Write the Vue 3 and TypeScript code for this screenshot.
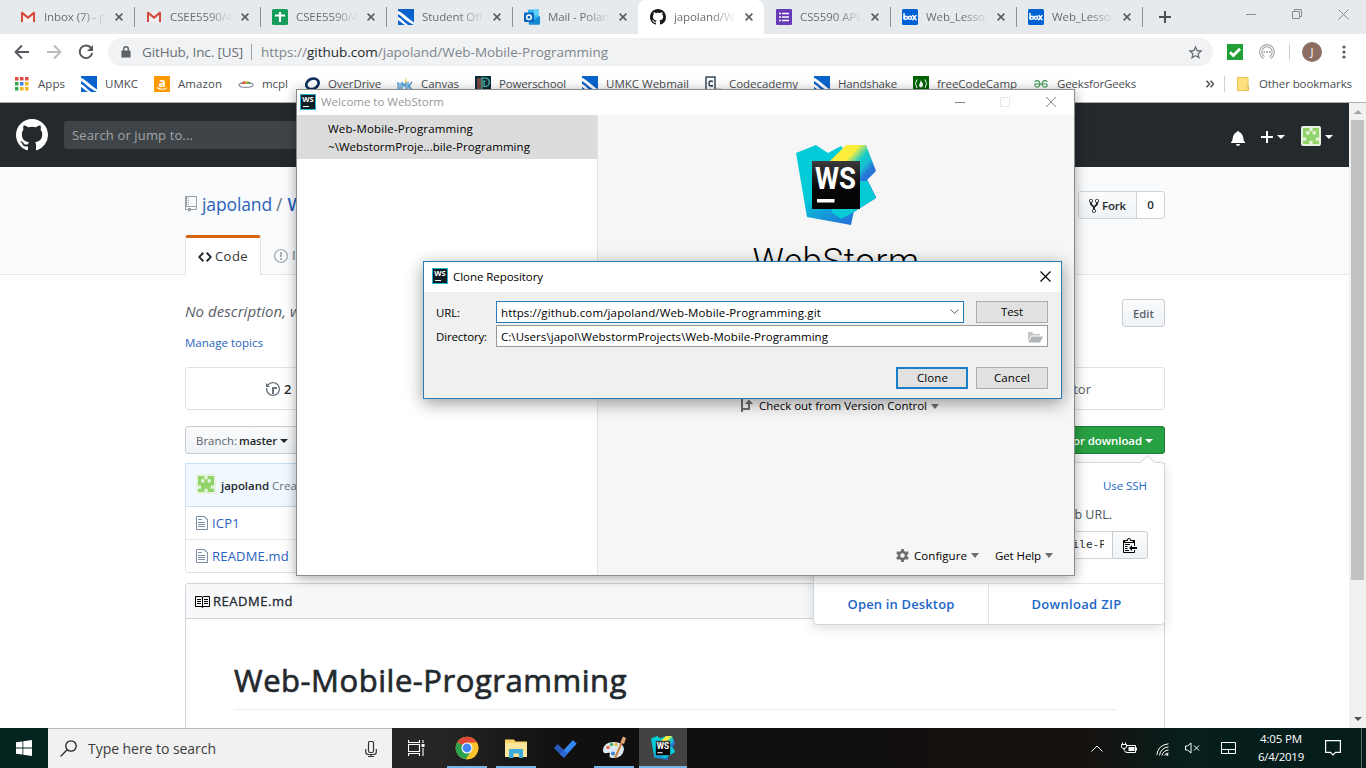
<script setup lang="ts">
interface Tab { icon: string; title: string; active?: boolean; sep?: boolean }
interface Bookmark { icon: string; title: string; width: number }

// Tracks a label in or out so that it takes up exactly the given width.
const vFit = {
  mounted(el: HTMLElement, binding: { value: number }) {
    const natural = el.getBoundingClientRect().width
    const count = (el.textContent ?? '').length
    if (count > 0) {
      el.style.letterSpacing = `${(binding.value - natural) / count}px`
      el.style.width = `${binding.value}px`
    }
  },
}

const tabs: Tab[] = [
  { icon: 'gmail', title: 'Inbox (7) - poland', sep: true },
  { icon: 'gmail', title: 'CSEE5590/490', sep: true },
  { icon: 'sheets', title: 'CSEE5590/490', sep: true },
  { icon: 'umkc', title: 'Student Office', sep: true },
  { icon: 'outlook', title: 'Mail - Poland' },
  { icon: 'github', title: 'japoland/Web', active: true },
  { icon: 'forms', title: 'CS5590 APL', sep: true },
  { icon: 'box', title: 'Web_Lesson', sep: true },
  { icon: 'box', title: 'Web_Lesson', sep: true },
]

const bookmarks: Bookmark[] = [
  { icon: 'apps', title: 'Apps', width: 27 },
  { icon: 'umkc', title: 'UMKC', width: 33 },
  { icon: 'amazon', title: 'Amazon', width: 44 },
  { icon: 'mcpl', title: 'mcpl', width: 26 },
  { icon: 'overdrive', title: 'OverDrive', width: 53 },
  { icon: 'canvas', title: 'Canvas', width: 38 },
  { icon: 'power', title: 'Powerschool', width: 67 },
  { icon: 'umkc', title: 'UMKC Webmail', width: 83 },
  { icon: 'codecademy', title: 'Codecademy', width: 69 },
  { icon: 'umkc', title: 'Handshake', width: 59 },
  { icon: 'fcc', title: 'freeCodeCamp', width: 80 },
  { icon: 'geeks', title: 'GeeksforGeeks', width: 79 },
]

const files: { name: string; width: number }[] = [
  { name: 'ICP1', width: 28 },
  { name: 'README.md', width: 77 },
]

const pinned: { icon: string; running: boolean; active?: boolean }[] = [
  { icon: 'chrome', running: true },
  { icon: 'explorer', running: true },
  { icon: 'todo', running: false },
  { icon: 'paint', running: true },
  { icon: 'wslogo', running: true, active: true },
]
</script>

<template>
  <div class="desktop">
    <svg class="sprite" aria-hidden="true">
      <defs>
        <linearGradient id="wsBlue" x1="0.2" y1="0.3" x2="0.6" y2="1">
          <stop offset="0.35" stop-color="#04cbd8" /><stop offset="1" stop-color="#2274d8" />
        </linearGradient>
        <linearGradient id="wsYellow" x1="0.25" y1="0.1" x2="0.8" y2="0.9">
          <stop offset="0.14" stop-color="#fdee3c" /><stop offset="0.32" stop-color="#17cbc7" /><stop offset="0.44" stop-color="#17c0d4" /><stop offset="0.56" stop-color="#2775d8" />
        </linearGradient>
        <linearGradient id="wsBlack" x1="0" y1="0" x2="0" y2="1">
          <stop offset="0" stop-color="#3b3b3b" /><stop offset="0.6" stop-color="#050505" />
        </linearGradient>
      </defs>
      <symbol id="gmail" viewBox="0 0 16 16">
        <path d="M2 3h12v10H2z" fill="#f1efef" /><path d="M1 3.4V13h2V6l5 4 5-4v7h2V3.4L13.800 2.600 8 7.200 2.200 2.600z" fill="#d54b3d" />
      </symbol>
      <symbol id="sheets" viewBox="0 0 16 16">
        <rect width="16" height="16" rx="1.500" fill="#149d5b" /><path d="M3 6.500h10M8 3v10" stroke="#fff" stroke-width="2.200" />
      </symbol>
      <symbol id="umkc" viewBox="0 0 16 16">
        <rect width="16" height="16" fill="#0a63cb" />
        <path d="M0 2c4 1 8 6 16 11.500V16C8 12.500 4 7 0 5z" fill="#fff" /><path d="M0 8c3 1 6 5 10 8H7C4 14.500 2 12 0 11z" fill="#fff" />
      </symbol>
      <symbol id="outlook" viewBox="0 0 16 16">
        <rect x="4" y="0.500" width="11" height="12" rx="1" fill="#33b6ee" /><rect x="9.500" y="0.500" width="5.500" height="6" fill="#60d2fa" />
        <path d="M4 8l6 3 6-4v7.500a1.200 1.200 0 0 1-1.200 1.200H5z" fill="#1688d6" />
        <rect y="3.500" width="10" height="9.500" rx="1" fill="#0967bd" /><circle cx="5" cy="8.200" r="2.300" fill="none" stroke="#fff" stroke-width="1.500" />
      </symbol>
      <symbol id="github" viewBox="0 0 16 16">
        <path d="M8 0C3.580 0 0 3.580 0 8c0 3.540 2.290 6.530 5.470 7.590.4.070.55-.17.55-.38 0-.19-.01-.82-.01-1.490-2.010.37-2.530-.49-2.690-.94-.09-.23-.48-.94-.82-1.130-.28-.15-.68-.52-.01-.53.63-.01 1.080.58 1.230.82.72 1.210 1.870.87 2.330.66.07-.52.28-.87.51-1.070-1.780-.2-3.640-.89-3.640-3.950 0-.87.31-1.590.82-2.150-.08-.2-.36-1.020.08-2.120 0 0 .67-.21 2.200.82.64-.18 1.320-.27 2-.27s1.360.09 2 .27c1.530-1.040 2.200-.82 2.200-.82.44 1.100.16 1.920.08 2.120.51.56.82 1.270.82 2.150 0 3.070-1.870 3.750-3.650 3.950.29.25.54.73.54 1.480 0 1.070-.01 1.930-.01 2.200 0 .21.15.46.55.38A8.010 8.010 0 0 0 16 8c0-4.420-3.580-8-8-8z" fill="currentColor" />
      </symbol>
      <symbol id="forms" viewBox="0 0 16 16">
        <rect width="16" height="16" rx="1" fill="#673ab7" /><path d="M3 4.500h2M3 8h2M3 11.500h2M6 4.500h7M6 8h7M6 11.500h7" stroke="#fff" stroke-width="1.600" />
      </symbol>
      <symbol id="box" viewBox="0 0 16 16">
        <rect width="16" height="16" rx="1.500" fill="#0061d5" />
        <path d="M2 4.500v5.500M10.800 6.500l3.200 4.200M14 6.500l-3.200 4.200" stroke="#fff" stroke-width="1.500" stroke-linecap="round" />
        <circle cx="3.800" cy="8.800" r="1.600" fill="none" stroke="#fff" stroke-width="1.400" /><circle cx="8" cy="8.800" r="1.600" fill="none" stroke="#fff" stroke-width="1.400" />
      </symbol>
      <symbol id="apps" viewBox="0 0 16 16">
        <path d="M1 1h3.500v3.500H1zM6 1h3.500v3.500H6zM11 1h3.500v3.500H11z" fill="#e04a3f" /><path d="M1 6h3.500v3.500H1zM1 11h3.500v3.500H1z" fill="#36a852" /><path d="M6 6h3.500v3.500H6z" fill="#4285e8" /><path d="M11 6h3.500v3.500H11zM6 11h3.500v3.500H6zM11 11h3.500v3.500H11z" fill="#f2b51d" />
      </symbol>
      <symbol id="amazon" viewBox="0 0 16 16">
        <rect width="16" height="16" fill="#ff9900" /><text x="8" y="10.500" text-anchor="middle" font-family="Open Sans, sans-serif" font-weight="700" font-size="12" fill="#fff">a</text><path d="M3 11.500q5 3.300 9.500.4" fill="none" stroke="#fff" stroke-width="1.200" />
      </symbol>
      <symbol id="mcpl" viewBox="0 0 16 16">
        <ellipse cx="8" cy="9" rx="7" ry="2.400" fill="none" stroke="#8b8fa5" stroke-width="1.200" /><path d="M3 8a5 4 0 0 1 4-3l1 3z" fill="#d5563d" /><path d="M7 5a5 4 0 0 1 4 1L8 8z" fill="#e3b73c" /><path d="M10.500 5.500A4 4 0 0 1 13 8H8z" fill="#56a457" />
      </symbol>
      <symbol id="overdrive" viewBox="0 0 16 16">
        <ellipse cx="8.500" cy="8" rx="6.400" ry="5" fill="none" stroke="#0c2e5e" stroke-width="2.600" transform="rotate(-25 8 8)" />
      </symbol>
      <symbol id="canvas" viewBox="0 0 16 16">
        <path d="M1 6v6q0 2 2 2V7M5 14V6l2 4 2-4v8M11 6v8M15 6l-3 4 3 4" fill="none" stroke="#4b9bd8" stroke-width="1.300" /><path d="M9 1l1 5-2 2z" fill="#f0c23b" />
      </symbol>
      <symbol id="power" viewBox="0 0 16 16">
        <rect width="16" height="16" fill="#0c2b3c" /><path d="M3 2v14M5 2v14" stroke="#db6747" /><path d="M7 16V2h3a4 4 0 0 1 0 8.500H9V5h1.500" fill="none" stroke="#5bc6ae" stroke-width="1.200" />
      </symbol>
      <symbol id="codecademy" viewBox="0 0 16 16">
        <rect x="1" y="1" width="9" height="13" fill="none" stroke="#284152" stroke-width="1.400" /><path d="M8 5.500Q7 5 6 5q-2 0-2 2.500T6 10q1 0 2-.5" fill="none" stroke="#284152" stroke-width="1.400" /><path d="M11 13.500h5" stroke="#284152" stroke-width="1.400" />
      </symbol>
      <symbol id="fcc" viewBox="0 0 16 16">
        <rect width="16" height="16" fill="#006400" /><path d="M4 3.500Q1 7.500 4 12M12 3.500Q15 7.500 12 12" fill="none" stroke="#fff" /><path d="M8 3.500c0 3 2.500 3 2 6q-.5 2-2 2t-2-2C6 8 7.500 7 8 3.500z" fill="#fff" />
      </symbol>
      <symbol id="geeks" viewBox="0 0 16 16">
        <path d="M1.500 5.500Q6.500 3 7 8q-.5 4.500-5 2.500M14.500 5.500Q9.500 3 9 8q.5 4.500 5 2.500V8M2 10V8h12" fill="none" stroke="#3b9c52" stroke-width="1.100" />
      </symbol>
      <symbol id="avatar" viewBox="0 0 20 20">
        <rect width="20" height="20" rx="2" fill="#e6f3de" />
        <path d="M2 2h6.400v3.200H5.200v3.200h3.200V5.200h3.200v3.200h3.200V5.200h-3.200V2H18v9.600h-3.200v3.200H18V18h-6.400v-3.200H8.400V18H2v-3.200h3.200v-3.200H2z" fill="#91d46a" />
      </symbol>
      <symbol id="wsmini" viewBox="0 0 16 16">
        <rect width="16" height="16" fill="#20b5cc" /><rect x="1" y="1" width="14" height="14" fill="#101d22" />
        <text x="8" y="8" text-anchor="middle" font-family="Open Sans, sans-serif" font-weight="700" font-size="7.500" fill="#fff">WS</text><path d="M3 12.500h6" stroke="#fff" />
      </symbol>
      <symbol id="wslogo" viewBox="0 0 80 80">
        <path d="M0 8L20 0l12 8L45 1l27 35 8 16-22 14-3 14-44-8z" fill="url(#wsBlue)" />
        <path d="M34 16L50 0h20l10 26-10 10 10 17-22 14-13 7z" fill="url(#wsYellow)" /><path d="M50 36h21l9 17-24 15-11 6-10-7z" fill="#06cbd7" />
        <rect x="16" y="16" width="48" height="48" fill="url(#wsBlack)" />
        <text x="19" y="43.500" textLength="41" lengthAdjust="spacingAndGlyphs" font-family="Roboto, sans-serif" font-weight="700" font-size="31" fill="#fff">WS</text>
        <rect x="21" y="54" width="17.500" height="3.500" fill="#fff" />
      </symbol>
      <symbol id="chrome" viewBox="0 0 24 24">
        <circle cx="12" cy="12" r="11.300" fill="#fbc32b" /><path d="M12 12L2.200 6.300A11.300 11.300 0 0 1 21.800 6.300z" fill="#e0483a" /><path d="M2.200 6.300A11.300 11.300 0 0 0 11 23.300L17 14z" fill="#2da24f" /><path d="M12 6.500h9.900A11.300 11.300 0 0 1 11 23.300L16.800 14.600z" fill="#fbc32b" />
        <circle cx="12" cy="12" r="5.500" fill="#fff" /><circle cx="12" cy="12" r="4.400" fill="#4285f4" />
      </symbol>
      <symbol id="explorer" viewBox="0 0 24 24">
        <path d="M1 3.500h9l1.500 2H23V21H1z" fill="#fbd667" /><path d="M1 7h22v14H1z" fill="#fde69b" /><path d="M5 22v-8q0-1 1-1h12q1 0 1 1v8h-4v-4.500H9.500V22z" fill="#3fa9dc" />
      </symbol>
      <symbol id="todo" viewBox="0 0 24 24">
        <path d="M.8 12l4-4 6 6-3.900 4z" fill="#2857b8" /><path d="M6.900 18L20 4l3.700 3.800-12.800 14z" fill="#3487f1" /><path d="M6.900 18l4-4 3.800 3.800-3.800 4z" fill="#2c66d0" />
      </symbol>
      <symbol id="paint" viewBox="0 0 24 24">
        <path d="M1 14Q2 6 12 6q9 0 10 7-1 9-11 9-5 0-3-4 0-2-3-1-4 1-4-3z" fill="#dbeaf4" />
        <circle cx="6" cy="11.500" r="1.800" fill="#e46b44" /><circle cx="9.500" cy="8.500" r="1.700" fill="#4eaf56" /><circle cx="14" cy="8.500" r="1.700" fill="#e9b93d" /><circle cx="11" cy="17.500" r="2" fill="#3c87d0" />
        <path d="M20.500 5L13 22" stroke="#cd8742" stroke-width="2.200" /><path d="M18.500 6L21 .5 24 2l-2 6z" fill="#dca87b" />
      </symbol>
    </svg>

    <header class="browser">
      <div class="tabstrip">
        <div v-for="(t, i) in tabs" :key="i" class="tab" :class="{ active: t.active, sep: t.sep }">
          <svg class="i16"><use :href="'#' + t.icon" /></svg>
          <span class="tab-title">{{ t.title }}</span>
          <svg class="tab-x" viewBox="0 0 8 8"><path d="M.6.6l6.800 6.800M7.400.6L.6 7.400" /></svg>
        </div>
        <svg class="newtab" viewBox="0 0 12 12"><path d="M6 0v12M0 6h12" /></svg>
        <svg class="wincontrols" viewBox="0 0 104 12"><path d="M1 6.500h10M47.500 3.500h7v7h-7zM49.500 3.500v-2h7v7h-2M93.500 1.500l10 10M103.500 1.500l-10 10" /></svg>
      </div>
      <div class="toolbar">
        <svg class="nav" viewBox="0 0 16 16"><path d="M15 8H2M8 1.500L1.500 8 8 14.500" /></svg>
        <svg class="nav faded" viewBox="0 0 16 16"><path d="M1 8h13M8 1.500L14.500 8 8 14.500" /></svg>
        <svg class="nav" viewBox="0 0 16 16"><path d="M13.200 4.200A6.300 6.300 0 1 0 14.200 9" /><path d="M15 1v6H9z" class="solid" /></svg>
        <div class="omnibox">
          <svg class="lock" viewBox="0 0 10 12"><path d="M1 5h8v6H1z" fill="#5f6368" stroke="#5f6368" stroke-linejoin="round" stroke-width="1.200" /><path d="M2.700 5V3a2.300 2.300 0 0 1 4.600 0v2" fill="none" stroke="#5f6368" stroke-width="1.400" /></svg>
          <span v-fit="101" class="fit site">GitHub, Inc. [US]</span>
          <i class="osep"></i>
          <span v-fit="347" class="fit url">https://<b>github.com</b>/japoland/Web-Mobile-Programming</span>
          <svg class="star" viewBox="0 0 24 24"><path fill="#5f6368" d="M22 9.240l-7.190-.62L12 2 9.190 8.630 2 9.240l5.460 4.730L5.820 21 12 17.270 18.180 21l-1.630-7.030L22 9.240zM12 15.400l-3.760 2.270 1-4.280-3.320-2.880 4.380-.38L12 6.100l1.710 4.040 4.380.38-3.320 2.880 1 4.280L12 15.400z" /></svg>
        </div>
        <svg class="ext" viewBox="0 0 16 16"><rect width="16" height="16" fill="#21a038" /><path d="M3 8.200l3.400 3.400L13 4.800" fill="none" stroke="#fff" stroke-width="2.800" /></svg>
        <svg class="ext second" viewBox="0 0 16 16" fill="none" stroke="#a5a5a5" stroke-width="1.100"><path d="M4.500 14.500a7.400 7.400 0 1 1 7 0M5.500 12.500a5.200 5.200 0 1 1 5 0" /><path d="M4.500 8h1.300M7.300 8h1.400M10.200 8h1.300" stroke="#777" stroke-width="1.400" /></svg>
        <i class="tsep"></i>
        <span class="profile">J</span>
        <svg class="kebab" viewBox="0 0 4 14"><circle cx="2" cy="2" r="1.600" /><circle cx="2" cy="7" r="1.600" /><circle cx="2" cy="12" r="1.600" /></svg>
      </div>
      <div class="bookmarks">
        <div v-for="(b, i) in bookmarks" :key="i" class="bm">
          <svg class="i16"><use :href="'#' + b.icon" /></svg><span v-fit="b.width" class="fit">{{ b.title }}</span>
        </div>
        <div class="others">
          <svg class="more" viewBox="0 0 8 8"><path d="M.5.8L3.500 4l-3 3.200M4.500.8l3 3.200-3 3.200" /></svg>
          <i></i>
          <svg class="folder" viewBox="0 0 12 14"><path d="M.5.5h10.500v13H.5z" fill="#fddf7e" stroke="#e6c153" /><path d="M9.500 9.500h2v4h-2z" fill="#fce9a6" stroke="#e0b73d" stroke-width=".8" /></svg>
          <span v-fit="93" class="fit">Other bookmarks</span>
        </div>
      </div>
    </header>

    <div class="viewport">
      <main class="page">
        <div class="ghhead">
          <svg class="mark"><use href="#github" /></svg>
          <div class="ghsearch"><span v-fit="121" class="fit">Search or jump to...</span></div>
          <svg class="bell" viewBox="0 0 14 16"><path d="M14 12v1H0v-1l.73-.58c.77-.77.81-2.550 1.190-4.420C2.690 3.230 6 2 6 2c0-.55.45-1 1-1s1 .45 1 1c0 0 3.390 1.230 4.160 5 .38 1.880.42 3.660 1.190 4.420l.66.58H14zm-7 4c1.110 0 2-.89 2-2H5c0 1.110.89 2 2 2z" /></svg>
          <svg class="plus" viewBox="0 0 12 16"><path d="M12 9H7v5H5V9H0V7h5V2h2v5h5v2z" /></svg>
          <i class="caret"></i>
          <svg class="me"><use href="#avatar" /></svg>
          <i class="caret"></i>
        </div>
        <div class="repohead">
          <div class="title-row">
            <svg class="repo" viewBox="0 0 12 16"><path d="M4 9H3V8h1v1zm0-3H3v1h1V6zm0-2H3v1h1V4zm0-2H3v1h1V2zm8-1v12c0 .55-.45 1-1 1H6v2l-1.500-1.500L3 16v-2H1c-.55 0-1-.45-1-1V1c0-.55.45-1 1-1h10c.55 0 1 .45 1 1zm-1 10H1v2h2v-1h3v1h5v-2zm0-10H2v9h9V1z" /></svg>
            <span v-fit="70" class="fit owner">japoland</span><span class="slash">/</span><strong>Web-Mobile-Programming</strong>
            <div class="fork">
              <span class="fork-btn"><svg viewBox="0 0 10 16"><path d="M8 1a1.993 1.993 0 0 0-1 3.720V6L5 8 3 6V4.720A1.993 1.993 0 0 0 2 1a1.993 1.993 0 0 0-1 3.720V6.500l3 3v1.780A1.993 1.993 0 0 0 5 15a1.993 1.993 0 0 0 1-3.720V9.500l3-3V4.720A1.993 1.993 0 0 0 8 1zM2 4.200C1.340 4.200.8 3.650.8 3c0-.65.55-1.200 1.200-1.200.65 0 1.200.55 1.200 1.200 0 .65-.55 1.200-1.200 1.200zm3 10c-.66 0-1.200-.55-1.200-1.200 0-.65.55-1.200 1.200-1.200.65 0 1.200.55 1.200 1.200 0 .65-.55 1.200-1.200 1.200zm3-10c-.66 0-1.200-.55-1.200-1.200 0-.65.55-1.200 1.200-1.200.65 0 1.200.55 1.200 1.200 0 .65-.55 1.200-1.200 1.200z" /></svg><span v-fit="24" class="fit">Fork</span></span><span class="count">0</span>
            </div>
          </div>
          <div class="repo-tabs">
            <div class="rtab on"><svg viewBox="0 0 14 16"><path d="M9.500 3L8 4.500 11.500 8 8 11.500 9.500 13 14 8 9.500 3zm-5 0L0 8l4.500 5L6 11.500 2.500 8 6 4.500 4.500 3z" /></svg><span v-fit="33" class="fit">Code</span></div>
            <div class="rtab"><svg viewBox="0 0 14 16"><path d="M7 2.300c3.140 0 5.700 2.560 5.700 5.700s-2.560 5.700-5.700 5.700A5.710 5.710 0 0 1 1.300 8c0-3.140 2.560-5.700 5.700-5.700zM7 1C3.140 1 0 4.140 0 8s3.140 7 7 7 7-3.140 7-7-3.140-7-7-7zm1 3H6v5h2V4zm0 6H6v2h2v-2z" /></svg><span>Issues</span></div>
          </div>
        </div>
        <div class="content">
          <div class="desc"><em>No description, website, or topics provided.</em><span class="btn edit"><span v-fit="21" class="fit">Edit</span></span></div>
          <div class="topics"><span v-fit="78" class="fit">Manage topics</span></div>
          <div class="stats">
            <span class="commits"><svg viewBox="0 0 14 16"><path d="M8 13H6V6h5v2H8v5zM7 1C4.810 1 2.870 2.020 1.590 3.590L0 2v4h4L2.500 4.500C3.550 3.170 5.170 2.300 7 2.300c3.140 0 5.700 2.560 5.700 5.700s-2.560 5.700-5.700 5.700A5.710 5.710 0 0 1 1.300 8c0-.34.03-.67.09-1H.08C.03 7.330 0 7.660 0 8c0 3.860 3.140 7 7 7s7-3.140 7-7-3.140-7-7-7z" /></svg><b>2</b> commits</span>
            <span class="contrib">1 contributor</span>
          </div>
          <div class="filenav">
            <span class="btn branch"><span v-fit="41" class="fit grey">Branch:</span><span v-fit="38" class="fit">master</span><i class="caret"></i></span>
            <div class="getrepo">
              <span class="green">Clone&nbsp;<span v-fit="69" class="fit">or download</span><i class="caret"></i></span>
              <div class="menu">
                <div class="menu-top">
                  <a><span v-fit="44" class="fit">Use SSH</span></a>
                  <p>Use Git or checkout with SVN using the web URL.</p>
                  <div class="clone-url">
                    <span class="mono"><span>https://github.com/japoland/Web-Mobile-Programming.git</span></span>
                    <span class="clip"><svg viewBox="0 0 14 16"><path d="M2 13h4v1H2v-1zm5-6H2v1h5V7zm2 3V8l-3 3 3 3v-2h5v-2H9zM4.500 9H2v1h2.500V9zM2 12h2.500v-1H2v1zm9 1h1v2c-.02.28-.11.52-.3.7-.19.18-.42.28-.7.3H1c-.55 0-1-.45-1-1V4c0-.55.45-1 1-1h3c0-1.110.89-2 2-2 1.110 0 2 .89 2 2h3c.55 0 1 .45 1 1v5h-1V6H1v9h10v-2zM2 5h8c0-.55-.45-1-1-1H8c-.55 0-1-.45-1-1s-.45-1-1-1-1 .45-1 1-.45 1-1 1H3c-.55 0-1 .45-1 1z" /></svg></span>
                  </div>
                </div>
                <div class="menu-bottom"><span><span v-fit="107" class="fit">Open in Desktop</span></span><span><span v-fit="90" class="fit">Download ZIP</span></span></div>
              </div>
            </div>
          </div>
          <div class="files">
            <div class="commit"><svg><use href="#avatar" /></svg><b v-fit="48" class="fit">japoland</b><span>Create README.md</span></div>
            <div v-for="f in files" :key="f.name" class="file"><svg viewBox="0 0 12 16"><path d="M6 5H2V4h4v1zM2 8h7V7H2v1zm0 2h7V9H2v1zm0 2h7v-1H2v1zm10-7.500V14c0 .55-.45 1-1 1H1c-.55 0-1-.45-1-1V2c0-.55.45-1 1-1h7.500L12 4.500zM11 5L8 2H1v12h10V5z" /></svg><span v-fit="f.width" class="fit">{{ f.name }}</span></div>
          </div>
          <div class="readme">
            <div class="rm-head"><svg viewBox="0 0 16 16"><path d="M3 5h4v1H3V5zm0 3h4V7H3v1zm0 2h4V9H3v1zm11-5h-4v1h4V5zm0 2h-4v1h4V7zm0 2h-4v1h4V9zm2-6v9c0 .55-.45 1-1 1H9.500l-1 1-1-1H2c-.55 0-1-.45-1-1V3c0-.55.45-1 1-1h5.500l1 1 1-1H15c.55 0 1 .45 1 1zm-8 .5L7.500 3H2v9h6V3.500zm7-.5H9.500l-.5.5V12h6V3z" /></svg><span v-fit="80" class="fit">README.md</span></div>
            <h1><span v-fit="393" class="fit">Web-Mobile-Programming</span></h1>
          </div>
        </div>
      </main>
      <div class="scroll"><i class="up"></i><i class="thumb"></i><i class="down"></i></div>
    </div>

    <footer class="taskbar">
      <div class="start"><svg viewBox="0 0 16 16"><path d="M0 2.300L6.500 1.400v6.200H0zM7.300 1.300L16 0v7.600H7.300zM0 8.400h6.500v6.200L0 13.700zM7.300 8.400H16V16l-8.700-1.300z" /></svg></div>
      <div class="tsearch">
        <svg class="mag" viewBox="0 0 17 17"><circle cx="11" cy="6" r="5.200" /><path d="M7.200 9.800L.6 16.400" /></svg>
        <span v-fit="128" class="fit">Type here to search</span>
        <svg class="mic" viewBox="0 0 12 16"><rect x="3.500" y=".5" width="5" height="11" rx="1.500" /><path d="M.7 8v3q0 2.500 2.500 2.500h5.600q2.500 0 2.500-2.500V8M6 13.500v2M3 15.500h6" /></svg>
      </div>
      <div class="tview"><svg viewBox="0 0 17 16"><path d="M.5 0v2.500h11V0M.5 16v-2.500h11V16M.5 4.500h11v7H.5zM15 0v3M15 8v8" /><path d="M13.500 4h3v3h-3z" fill="#fff" stroke="none" /></svg></div>
      <div v-for="p in pinned" :key="p.icon" class="pin" :class="{ running: p.running, current: p.active }"><svg><use :href="'#' + p.icon" /></svg></div>
      <div class="tray">
        <svg class="t-chev" viewBox="0 0 12 7"><path d="M.5 6.500L6 1l5.500 5.500" /></svg>
        <svg class="t-bat" viewBox="0 0 17 12"><path d="M6 3.500h8.500v7H5M15.500 5.500v3" /><path d="M7.500 5h6v4h-6z" fill="#fff" stroke="none" /><path d="M1.500.5v2M4.500.5v2M.5 2.500h5V5Q5 6.500 3 6.500T.5 5zM3 6.500q0 4 3 3.500" /></svg>
        <svg class="t-wifi" viewBox="0 0 13 13"><path d="M.8 12Q2 2 12.500.8M3.500 12.500Q4.500 5 12.500 3.800M6 12.500Q7 8 12.500 6.800M8.600 12.500q.5-2 3.900-2.500" /><circle cx="11.300" cy="11.800" r="1.100" fill="#fff" stroke="none" /></svg>
        <svg class="t-vol" viewBox="0 0 15 12"><path d="M.5 4h2L6 1v10L2.500 8h-2zM9 3.500l5 5M14 3.500l-5 5" /></svg>
        <svg class="t-pad" viewBox="0 0 15 12"><path d="M.5.5h14v11H.5zM.5 7.500h14M7.500 7.500v4" /></svg>
        <div class="clock"><span v-fit="42" class="fit">4:05 PM</span><span v-fit="46" class="fit">6/4/2019</span></div>
        <svg class="t-note" viewBox="0 0 16 16"><path d="M.6.6h14.800v11.800H10.500L8 15l-2.500-2.600H.6z" /></svg>
        <i class="peek"></i>
      </div>
    </footer>

    <section class="welcome">
      <div class="wtitle">
        <svg class="i16"><use href="#wsmini" /></svg><span v-fit="123" class="fit">Welcome to WebStorm</span>
        <svg class="wbtns" viewBox="0 0 102 12"><path d="M1 6.500h10" stroke="#888" /><path d="M46.500 1.500h9v9h-9z" stroke="#e6e6e6" /><path d="M92 1l10 10M102 1L92 11" stroke="#888" /></svg>
      </div>
      <div class="wbody">
        <aside>
          <div class="recent"><span v-fit="145" class="fit">Web-Mobile-Programming</span><span v-fit="202" class="fit">~\WebstormProje...bile-Programming</span></div>
        </aside>
        <div class="wmain">
          <svg class="biglogo"><use href="#wslogo" /></svg>
          <div class="product"><span v-fit="167" class="fit">WebStorm</span></div>
          <div class="checkout">
            <svg viewBox="0 0 12 14"><path d="M1 0v13M1 10h7V4" fill="none" stroke="#6e6e6e" stroke-width="2" /><path d="M4 5h8L8 .5z" fill="#6e6e6e" /></svg>
            <span v-fit="168" class="fit">Check out from Version Control</span><i class="dcaret"></i>
          </div>
          <div class="wfoot">
            <svg viewBox="0 0 12 12"><circle cx="6" cy="6" r="3.300" fill="none" stroke="#6e6e6e" stroke-width="2.400" /><path d="M6 0v2.500M6 9.500V12M.8 3l2.200 1.300M9 7.700L11.200 9M.8 9L3 7.700M9 4.300L11.200 3" stroke="#6e6e6e" stroke-width="2.600" /></svg>
            <span v-fit="53" class="fit">Configure</span><i class="dcaret"></i><span v-fit="46" class="fit help">Get Help</span><i class="dcaret"></i>
          </div>
        </div>
      </div>
    </section>

    <section class="dialog">
      <div class="dtitle"><svg class="i16"><use href="#wsmini" /></svg><span v-fit="90" class="fit">Clone Repository</span><svg class="dx" viewBox="0 0 11 11"><path d="M.5.5l10 10M10.500.5l-10 10" /></svg></div>
      <div class="dbody">
        <label><span v-fit="24" class="fit">URL:</span></label>
        <div class="field focus"><span v-fit="320" class="fit">https://github.com/japoland/Web-Mobile-Programming.git</span><svg class="down-chev" viewBox="0 0 9 5"><path d="M.5.5l4 3.800 4-3.800" /></svg></div>
        <span class="dbtn"><span v-fit="22" class="fit">Test</span></span>
        <label><span v-fit="51" class="fit">Directory:</span></label>
        <div class="field wide"><span v-fit="327" class="fit">C:\Users\japol\WebstormProjects\Web-Mobile-Programming</span><svg class="open" viewBox="0 0 16 12"><path d="M1 11V1h4l1.500 2H13v1.500H4z" fill="#c3c7ca" /><path d="M4.500 5.500H16L13 11.500H1.500z" fill="#afb4b8" /></svg></div>
      </div>
      <div class="dactions"><span class="dbtn primary"><span v-fit="31" class="fit">Clone</span></span><span class="dbtn"><span v-fit="36" class="fit">Cancel</span></span></div>
    </section>
  </div>
</template>

<style>
body { margin: 0; overflow: hidden; }
</style>

<style scoped>
* { box-sizing: border-box; }
.desktop { position: relative; width: 1366px; height: 768px; overflow: hidden; display: flex; flex-direction: column; font: 11.5px/16px "Open Sans", "Noto Sans", sans-serif; color: #24292e; background: #fff; }
.sprite { position: absolute; width: 0; height: 0; }
svg { flex: none; display: block; }
.fit { display: inline-block; white-space: nowrap; flex: none; }
.i16 { width: 16px; height: 16px; }

.browser { height: 103px; background: #fff; border-bottom: 1px solid #aeb0b2; flex: none; }
.tabstrip { height: 34px; background: #e6eaed; display: flex; align-items: center; padding-left: 8px; color: #6a6e72; }
.tab { width: 126px; height: 34px; padding-left: 12px; display: flex; align-items: center; position: relative; flex: none; }
.tab.sep::after { content: ""; position: absolute; right: -1px; top: 7px; height: 20px; width: 1px; background: #8d9195; }
.tab.active { background: #fff; border-radius: 8px 8px 0 0; }
.tab.active svg:first-child { color: #17191c; }
.tab-title { margin-left: 8px; width: 62px; overflow: hidden; white-space: nowrap; letter-spacing: -0.1px; -webkit-mask-image: linear-gradient(90deg, #000 60%, transparent 100%); mask-image: linear-gradient(90deg, #000 60%, transparent 100%); }
.tab-x { width: 8px; height: 8px; margin-left: 9px; stroke: #5b5f63; stroke-width: 1.600; }
.newtab { width: 12px; height: 12px; margin-left: 17px; stroke: #4c5054; stroke-width: 2; }
.wincontrols { width: 104px; height: 12px; margin: 0 0 7px 74px; fill: none; stroke: #8a8c8e; }
.toolbar { height: 36px; display: flex; align-items: center; padding-left: 14px; }
.nav { width: 16px; height: 16px; margin-right: 16px; fill: none; stroke: #55595d; stroke-width: 1.900; }
.nav .solid { fill: #55595d; stroke: none; }
.nav.faded { stroke: #b9bbbd; }
.omnibox { width: 1105px; height: 28px; margin-left: -2px; border-radius: 14px; background: #f0f2f4; display: flex; align-items: center; padding-left: 13px; font-size: 13.500px; color: #6b6f73; }
.lock { width: 10px; height: 12px; margin-right: 11px; }
.osep { width: 1px; height: 16px; background: #a0a3a6; margin: 0 9px 0 8px; }
.url { color: #80868b; }
.url b { font-weight: 400; color: #26282b; }
.star { width: 17px; height: 17px; margin-left: 579px; }
.ext { width: 16px; height: 16px; margin-left: 14px; }
.ext.second { margin-left: 16px; }
.tsep { width: 1px; height: 16px; background: #cfd1d3; margin: 0 12px 0 14px; }
.profile { width: 20px; height: 20px; border-radius: 50%; background: #8d6e63; color: #fff; text-align: center; font-size: 11px; line-height: 20px; }
.kebab { width: 4px; height: 14px; margin-left: 20px; fill: #55595d; }
.bookmarks { height: 28px; display: flex; align-items: center; padding-left: 14px; color: #4a4d51; }
.bm { display: flex; align-items: center; margin-right: 16px; gap: 8px; }
.others { display: flex; align-items: center; margin-left: auto; padding-right: 14px; }
.more { width: 8px; height: 8px; fill: none; stroke: #4a4d51; stroke-width: 1.500; }
.others i { width: 1px; height: 16px; background: #cfd1d3; margin: 0 12px 0 10px; }
.folder { width: 12px; height: 14px; margin-right: 10px; }

.viewport { height: 625px; display: flex; flex: none; }
.page { width: 1349px; overflow: hidden; }
.ghhead { height: 64px; background: #24292e; display: flex; align-items: center; padding-left: 16px; color: #fff; fill: #fff; }
.mark { width: 32px; height: 32px; }
.ghsearch { width: 300px; height: 28px; margin-left: 16px; background: #3f4448; border-radius: 3px; padding: 6px 8px; font-size: 13px; color: #a0a4a7; }
.bell { width: 14px; height: 16px; margin: 5px 0 0 867px; }
.plus { width: 12px; height: 16px; margin: 4px 4px 0 16px; }
.caret { width: 0; height: 0; border: 4px solid transparent; border-top-color: currentColor; border-bottom: 0; flex: none; }
.ghhead .caret { margin-top: 3px; }
.me { width: 20px; height: 20px; margin: 2px 4px 0 16px; }
.repohead { height: 108px; background: #fafbfc; border-bottom: 1px solid #e1e4e8; padding: 24px 184px 0 185px; }
.title-row { height: 28px; display: flex; align-items: center; font-size: 17.500px; line-height: 26px; color: #2a63bd; }
.title-row > span, .title-row > strong { margin-top: -2px; }
.repo { width: 12px; height: 16px; fill: #999ea3; margin: -2px 5px 0 0; }
.title-row > .slash { color: #6a737d; margin: -2px 5px 0 4px; }
.title-row strong { font-weight: 600; }
.fork { margin-left: auto; display: flex; font-size: 11.500px; line-height: 26px; font-weight: 600; color: #24292e; border: 1px solid #cfd3d6; border-radius: 3px; height: 28px; width: 87px; background: #fff; }
.fork-btn { width: 58px; padding: 1px 0 0 10px; display: flex; align-items: center; gap: 3px; background: linear-gradient(#fafbfc, #eff3f6); border-right: 1px solid #cfd3d6; }
.fork-btn svg { width: 10px; height: 16px; fill: #24292e; }
.count { flex: 1; text-align: center; }
.repo-tabs { display: flex; margin-top: 16px; font-size: 13px; }
.rtab { height: 40px; padding: 2px 0 0 13px; display: flex; align-items: center; gap: 4px; color: #6a737d; fill: #aab0b5; }
.rtab span { margin-top: -2px; }
.rtab svg { width: 14px; height: 16px; }
.rtab.on { width: 76px; border: 1px solid #e1e4e8; border-top: 3px solid #dc6416; border-bottom: 0; background: #fff; border-radius: 3px 3px 0 0; padding: 1px 0 0 12px; color: #30353a; fill: #24292e; gap: 3px; }
.content { padding: 24px 184px 0 185px; }
.desc { height: 28px; display: flex; justify-content: space-between; align-items: center; font-size: 15px; color: #586069; letter-spacing: 0.050px; }
.desc em { margin-top: -4px; }
.btn { display: inline-flex; align-items: center; justify-content: center; height: 28px; border: 1px solid #c9cdd1; border-radius: 3px; background: linear-gradient(#fafbfc, #eff3f6); font-size: 11.300px; font-weight: 600; }
.edit { width: 43px; letter-spacing: 0; padding-top: 1px; }
.topics { margin-top: 8px; height: 16px; color: #2a63bd; }
.stats { height: 43px; margin-top: 16px; border: 1px solid #dfe2e5; border-radius: 3px; display: flex; justify-content: space-between; align-items: center; padding: 0 73px 0 80px; color: #586069; font-size: 13px; }
.commits { display: flex; align-items: center; gap: 4px; }
.commits svg { width: 14px; height: 16px; fill: #6a737d; }
.commits b { font-weight: 600; color: #24292e; }
.filenav { margin-top: 16px; display: flex; justify-content: space-between; }
.branch { width: 120px; padding: 2px 0 0 10px; justify-content: flex-start; }
.grey { font-weight: 400; color: #586069; margin-right: 2px; }
.branch .caret { margin-left: 3px; }
.getrepo { position: relative; z-index: 0; }
.green { display: flex; align-items: center; height: 28px; width: 132px; justify-content: flex-end; padding: 2px 11px 0 0; border: 1px solid #1f7a35; border-radius: 3px; background: #28a044; color: #fff; font-weight: 600; font-size: 11.500px; }
.green .caret { margin-left: 3px; }
.menu { position: absolute; right: 0; top: 36px; width: 352px; height: 163px; border: 1px solid #d5d8db; border-radius: 4px; background: #fff; box-shadow: 0 3px 12px rgba(27, 31, 35, 0.15); }
.menu::before { content: ""; position: absolute; right: 11px; top: -6px; width: 10px; height: 10px; background: #fff; border: solid #d5d8db; border-width: 1px 0 0 1px; transform: rotate(45deg); }
.menu-top { height: 120px; padding: 15px 16px 0; }
.menu-top a { display: flex; justify-content: flex-end; color: #1c66c9; padding-right: 1px; }
.menu-top p { margin: 12px 0 0; width: 282px; display: flex; justify-content: flex-end; line-height: 18px; font-size: 12.500px; white-space: nowrap; color: #4c545c; }
.clone-url { display: flex; height: 28px; margin-top: 7px; font: 11px/26px "DejaVu Sans Mono", monospace; }
.mono { width: 283px; border: 1px solid #d1d5da; border-right: 0; border-radius: 3px 0 0 3px; padding: 0 8px; overflow: hidden; }
.mono span { display: block; overflow: hidden; white-space: nowrap; letter-spacing: 0.050px; }
.clip { width: 36px; border: 1px solid #c9cdd1; border-radius: 0 3px 3px 0; background: linear-gradient(#fafbfc, #eff3f6); display: flex; align-items: center; justify-content: center; }
.clip svg { width: 14px; height: 16px; }
.menu-bottom { display: flex; height: 41px; border-top: 1px solid #e1e4e8; font-size: 13px; font-weight: 600; color: #1c66c9; }
.menu-bottom > span { width: 174px; display: flex; align-items: center; justify-content: center; }
.menu-bottom > span + span { border-left: 1px solid #e1e4e8; flex: 1; }
.files { height: 110px; margin-top: 9px; border: 1px solid #dfe2e5; border-radius: 3px; }
.commit { height: 44px; margin: -1px -1px 0; display: flex; align-items: center; padding: 1px 0 0 10px; border: 1px solid #c8dff5; background: #f1f8ff; color: #6a737d; }
.commit svg { width: 20px; height: 20px; margin: -4px 5px 0 0; }
.commit b { font-weight: 600; color: #24292e; margin-right: 3px; }
.file { height: 32px; display: flex; align-items: center; padding-left: 10px; gap: 4px; font-size: 13px; color: #2a63bd; }
.file + .file { border-top: 1px solid #e6e9ec; height: 33px; }
.file svg { width: 12px; height: 16px; fill: #7d8fa5; }
.readme { height: 260px; margin-top: 10px; border: 1px solid #d1d5da; border-radius: 3px; }
.rm-head { height: 35px; display: flex; align-items: center; padding-left: 8px; gap: 3px; background: #f6f8fa; border-bottom: 1px solid #d1d5da; font-size: 13px; font-weight: 400; -webkit-text-stroke: 0.300px #24292e; }
.rm-head svg { width: 16px; height: 16px; margin-top: 2px; }
.readme h1 { margin: 37px 48px 0; height: 54px; border-bottom: 1px solid #eaecef; font-size: 31px; line-height: 48px; font-weight: 400; -webkit-text-stroke: 0.700px #24292e; }
.scroll { width: 17px; background: #f1f1f1; display: flex; flex-direction: column; align-items: center; }
.scroll .up, .scroll .down { border: 4px solid transparent; }
.scroll .up { border-bottom-color: #a3a3a3; border-top: 0; margin: 7px 0 6px; }
.scroll .thumb { width: 13px; height: 460px; background: #c1c1c1; }
.scroll .down { border-top-color: #505050; border-bottom: 0; margin-top: auto; margin-bottom: 7px; }

.taskbar { height: 40px; flex: none; display: flex; background: linear-gradient(90deg, #242625 392px, #252525 440px, #11100f 560px, #100f0e 820px, #16110f 1080px, #071f1c 1190px, #041d1a); }
.start { width: 48px; background: #04251f; display: flex; align-items: center; justify-content: center; }
.start svg { width: 16px; height: 16px; fill: #fff; }
.tsearch { width: 344px; background: #f1f1f1; border-top: 1px solid #b9b9b9; display: flex; align-items: center; padding: 0 15px 0 12px; font-size: 14px; color: #3c3c3c; }
.mag { width: 17px; height: 17px; margin-right: 11px; fill: none; stroke: #222; stroke-width: 1.300; }
.mic { width: 12px; height: 16px; margin-left: auto; fill: none; stroke: #333; stroke-width: 1.200; }
.tview { width: 50px; display: flex; align-items: center; padding-left: 16px; }
.tview svg { width: 17px; height: 16px; fill: none; stroke: #fff; stroke-width: 1.100; }
.pin { width: 49px; display: flex; align-items: center; justify-content: center; position: relative; flex: none; }
.pin svg { width: 24px; height: 24px; }
.pin.running::after { content: ""; position: absolute; bottom: 0; left: 5px; right: 4px; height: 2px; background: #76b4e8; }
.pin.current { background: #434343; width: 48px; margin-left: 1px; }
.pin.current::after { left: 0; right: 0; }
.tray { margin-left: auto; display: flex; align-items: center; height: 40px; color: #fff; fill: none; stroke: #fff; }
.t-chev { width: 12px; height: 7px; margin-right: 18px; }
.t-bat { width: 17px; height: 12px; margin-right: 18px; }
.t-wifi { width: 13px; height: 13px; margin: 3px 16px 0 0; }
.t-vol { width: 15px; height: 12px; margin-right: 21px; }
.t-pad { width: 15px; height: 12px; margin-right: 21px; }
.clock { width: 48px; display: flex; flex-direction: column; align-items: center; line-height: 18px; font-size: 11.500px; margin-right: 20px; padding-bottom: 1px; }
.t-note { width: 16px; height: 16px; margin-right: 20px; stroke-width: 1.200; }
.peek { width: 1px; height: 40px; background: #5e6e6b; margin-right: 4px; }

.welcome { position: absolute; left: 296px; top: 89px; width: 779px; height: 487px; border: 1px solid #8b8b8b; background: #fff; box-shadow: 0 2px 12px rgba(0, 0, 0, 0.35); display: flex; flex-direction: column; color: #000; }
.wtitle { height: 25px; display: flex; align-items: center; padding: 0 18px 0 3px; gap: 5px; color: #999; flex: none; }
.wtitle span { margin-top: -2px; }
.wtitle .i16 { margin-top: -1px; }
.wbtns { width: 102px; height: 12px; margin: -1px 0 0 auto; fill: none; }
.wbody { flex: 1; display: flex; }
.wbody aside { width: 301px; border-right: 1px solid #e3e3e3; }
.recent { height: 44px; width: 300px; background: #dcdcdc; padding: 5px 0 0 31px; display: flex; flex-direction: column; align-items: flex-start; line-height: 18px; }
.wmain { flex: 1; background: #f6f6f6; display: flex; flex-direction: column; align-items: center; }
.biglogo { width: 80px; height: 80px; margin-top: 30px; }
.product { font: 300 35px/42px Roboto, sans-serif; margin-top: 16px; }
.checkout { display: flex; align-items: center; height: 16px; margin-top: 115px; gap: 5px; margin-left: 8px; }
.checkout svg { width: 12px; height: 14px; margin-right: 1px; }
.dcaret { border: 4.500px solid transparent; border-top: 5px solid #6e6e6e; border-bottom: 0; margin-left: -1px; flex: none; }
.wfoot { align-self: flex-end; display: flex; align-items: center; margin: auto 21px 11px 0; height: 17px; gap: 5px; }
.wfoot svg { width: 13px; height: 13px; }
.help { margin-left: 11px; }

.dialog { position: absolute; left: 423px; top: 261px; width: 639px; height: 138px; border: 1px solid #2a7ab8; background: #f0f0f0; box-shadow: 0 4px 16px rgba(0, 0, 0, 0.4); color: #000; }
.dtitle { height: 30px; background: #fff; display: flex; align-items: center; padding: 0 10px 0 8px; gap: 5px; }
.dtitle .i16 { margin-top: -2px; }
.dx { width: 11px; height: 11px; margin: -2px 0 0 auto; stroke: #000; stroke-width: 1.200; }
.dbody { display: grid; grid-template-columns: 60px 468px 12px 72px; row-gap: 2px; padding: 9px 13px 0 12px; }
.dbody .dbtn { grid-column: 4; }
.dbody label { height: 22px; display: flex; align-items: center; padding-top: 2px; }
.field { height: 22px; background: #fff; border: 1px solid #999; padding: 2px 4px 0; display: flex; align-items: center; justify-content: space-between; }
.field.focus { border-color: #2a7ab8; }
.field.wide { grid-column: 2 / 5; }
.down-chev { width: 9px; height: 5px; fill: none; stroke: #666; margin: -3px 0 0 0; }
.open { width: 16px; height: 12px; margin-top: -1px; }
.dbtn { height: 22px; width: 72px; background: #e1e1e1; border: 1px solid #adadad; display: flex; align-items: center; justify-content: center; }
.dactions { display: flex; justify-content: flex-end; gap: 8px; padding: 20px 13px 0 0; }
.dbtn.primary { border: 2px solid #1a7fcb; padding-left: 1px; }
</style>
